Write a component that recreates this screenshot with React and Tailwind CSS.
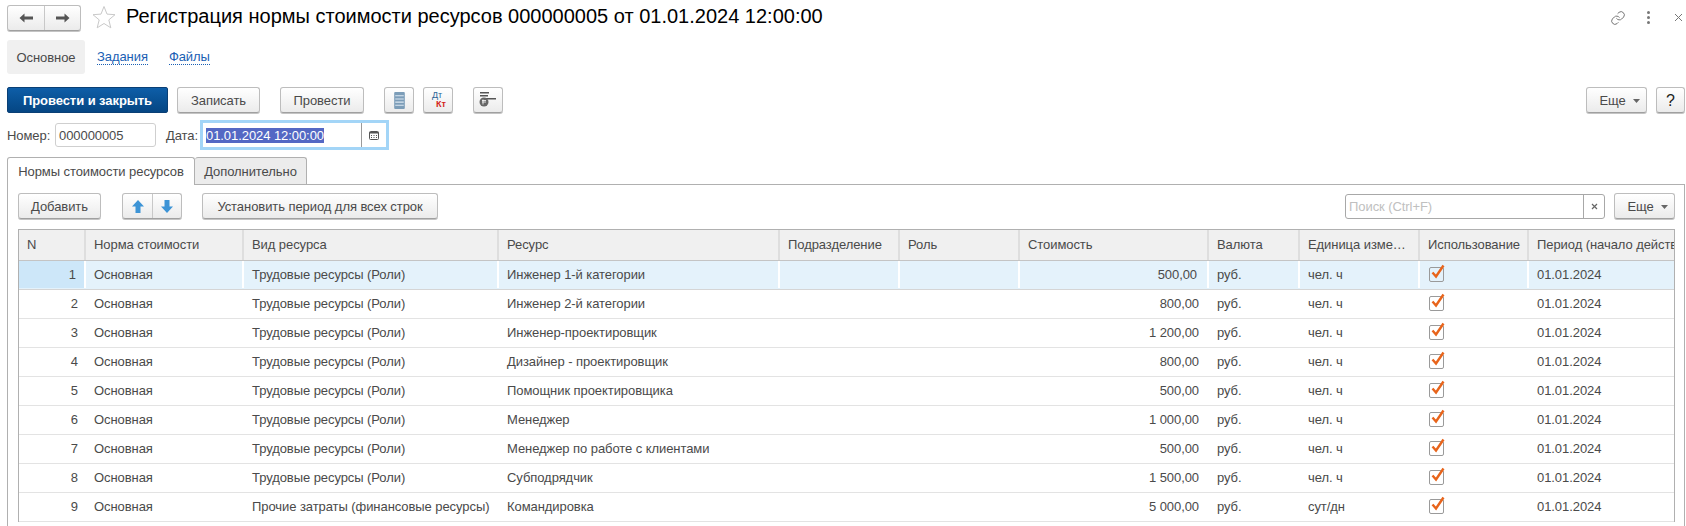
import React from "react";

const COLS = "grid grid-cols-[67px_158px_255px_281px_120px_120px_189px_91px_120px_109px_200px]";
const HEAD = ["N", "Норма стоимости", "Вид ресурса", "Ресурс", "Подразделение", "Роль", "Стоимость", "Валюта", "Единица измерения", "Использование", "Период (начало действия)"];
const T = "Трудовые ресурсы (Роли)";
const ROWS = [
  [1, T, "Инженер 1-й категории", "500,00", "чел. ч"],
  [2, T, "Инженер 2-й категории", "800,00", "чел. ч"],
  [3, T, "Инженер-проектировщик", "1 200,00", "чел. ч"],
  [4, T, "Дизайнер - проектировщик", "800,00", "чел. ч"],
  [5, T, "Помощник проектировщика", "500,00", "чел. ч"],
  [6, T, "Менеджер", "1 000,00", "чел. ч"],
  [7, T, "Менеджер по работе с клиентами", "500,00", "чел. ч"],
  [8, T, "Субподрядчик", "1 500,00", "чел. ч"],
  [9, "Прочие затраты (финансовые ресурсы)", "Командировка", "5 000,00", "сут/дн"],
];

const btn = "flex items-center justify-center h-[26px] rounded-[3px] border border-[#bdbdbd] border-b-[#a0a0a0] bg-gradient-to-b from-white to-[#ebebeb] shadow-[0_1px_0_#c4c4c4] text-[#4a4a4a]";

function Btn({ w, children }) {
  return <div className={`${btn} ${w}`}>{children}</div>;
}

function More({ w }) {
  return (
    <Btn w={w}>
      <span className="ml-[6px]">Еще</span>
      <svg width="7" height="4" viewBox="0 0 7 4" className="ml-[7px] mt-[2px]"><path d="M0 0h7L3.500 4z" fill="#666" /></svg>
    </Btn>
  );
}

function Check() {
  return (
    <svg width="18" height="20" viewBox="0 0 18 20" className="ml-[8px] -mt-[3px]">
      <rect x="1.500" y="4.500" width="14" height="14" rx="1.500" fill="none" stroke="#9a9a9a" />
      <path d="M4.500 9.500l3.500 4L15.500 2.500" fill="none" stroke="#e8641b" strokeWidth="2.400" />
    </svg>
  );
}

function Row({ r }) {
  const sel = r[0] === 1;
  const cell = `flex items-center px-2 whitespace-nowrap overflow-hidden ${sel ? "border-r-2 border-white" : ""}`;
  return (
    <div className={`${COLS} h-[29px] pb-px border-b border-[#e3e3e3] ${sel ? "bg-[#e4f2fb] border-b-[#d5d5d5]" : "bg-white"}`}>
      <div className={`${cell} justify-end ${sel ? "bg-[#cde7f9]" : ""}`}>{r[0]}</div>
      <div className={cell}>Основная</div>
      <div className={cell}>{r[1]}</div>
      <div className={cell}>{r[2]}</div>
      <div className={cell}></div>
      <div className={cell}></div>
      <div className={`${cell} justify-end pr-[10px]`}>{r[3]}</div>
      <div className={cell}>руб.</div>
      <div className={cell}>{r[4]}</div>
      <div className={`flex items-center ${sel ? "border-r-2 border-white" : ""}`}><Check /></div>
      <div className={cell}>01.01.2024</div>
    </div>
  );
}

export default function App() {
  return (
    <div className="w-[1686px] h-[526px] overflow-hidden bg-white text-[13px] leading-[15px] tracking-[-0.07px] text-[#4a4a4a] font-['Liberation_Sans',Arial,sans-serif]">
      {/* title */}
      <div className="flex items-center h-[35px] pl-[7px]">
        <div className={`${btn} w-[74px] h-[24px] !justify-start`}>
          <div className="w-[37px] h-full flex items-center justify-center border-r border-[#c8c8c8]">
            <svg width="15" height="10" viewBox="0 0 14 10"><path d="M0 5l5-4.500V3.500h8.500v3H5v3z" fill="#555" /></svg>
          </div>
          <div className="flex-1 flex items-center justify-center">
            <svg width="15" height="10" viewBox="0 0 14 10"><path d="M14 5L9 .5V3.500H.5v3H9v3z" fill="#555" /></svg>
          </div>
        </div>
        <svg width="24" height="24" viewBox="0 0 24 24" className="ml-[11px] mb-[2px]">
          <path d="M12 1.500l3 7.600 8 .6-6.200 5.200 2 7.900L12 18.500l-6.800 4.300 2-7.900L1 9.700l8-.6z" fill="none" stroke="#c9c9c9" />
        </svg>
        <div className="ml-[10px] mb-[3px] text-[20px] leading-[24px] tracking-normal text-black whitespace-nowrap">Регистрация нормы стоимости ресурсов 000000005 от 01.01.2024 12:00:00</div>
        <div className="ml-auto flex items-center pr-[3px]">
          <svg width="16" height="16" viewBox="0 0 24 24" fill="none" stroke="#777" strokeWidth="1.500" strokeLinecap="round">
            <path d="M10 13a5 5 0 0 0 7.500.5l3-3a5 5 0 0 0-7-7l-1.700 1.700" />
            <path d="M14 11a5 5 0 0 0-7.500-.5l-3 3a5 5 0 0 0 7 7l1.700-1.700" />
          </svg>
          <div className="ml-[21px] flex flex-col gap-[2px]">
            <div className="w-[3px] h-[3px] rounded-full bg-[#777]" />
            <div className="w-[3px] h-[3px] rounded-full bg-[#777]" />
            <div className="w-[3px] h-[3px] rounded-full bg-[#777]" />
          </div>
          <svg width="9" height="9" viewBox="0 0 9 9" className="ml-[24px]"><path d="M1 1l7 7M8 1L1 8" stroke="#777" /></svg>
        </div>
      </div>

      {/* page tabs */}
      <div className="flex items-center mt-[5px] ml-[7px] h-[34px]">
        <div className="w-[78px] h-full flex items-center justify-center bg-[#f0f0f0] rounded-[3px]">Основное</div>
        <span className="ml-[12px] text-[#1a5fb4] border-b border-dotted border-[#1a5fb4]">Задания</span>
        <span className="ml-[21px] text-[#1a5fb4] border-b border-dotted border-[#1a5fb4]">Файлы</span>
      </div>

      {/* command bar */}
      <div className="flex items-center mt-[13px] pr-px pl-[7px] h-[26px]">
        <div className="flex items-center justify-center w-[161px] h-[26px] rounded-[2px] border border-[#0a3f75] bg-gradient-to-b from-[#0e5ea8] to-[#054683] text-white font-bold">Провести и закрыть</div>
        <Btn w="w-[83px] ml-[9px]">Записать</Btn>
        <Btn w="w-[84px] ml-[20px]">Провести</Btn>
        <Btn w="w-[30px] ml-[20px]">
          <svg width="11" height="17" viewBox="0 0 10 16">
            <rect width="10" height="16" rx="1" fill="#7c9db8" />
            <path d="M1 3.500h8M1 6.500h8M1 9.500h8M1 12.500h8" stroke="#dce8f1" />
          </svg>
        </Btn>
        <Btn w="w-[30px] ml-[9px] relative">
          <span className="absolute left-[8px] top-[2px] text-[9px] leading-[10px] tracking-normal text-[#2a6496]">Дт</span>
          <span className="absolute left-[12px] top-[11px] text-[9px] leading-[10px] tracking-normal font-bold text-[#d3231a]">Кт</span>
        </Btn>
        <Btn w="w-[30px] ml-[20px]">
          <svg width="28" height="24" viewBox="0 0 28 24">
            <path d="M6 4h9v1.500H6zM6 7h8v1.500H6zM12 10h10v1.500H12z" fill="#555" />
            <circle cx="10" cy="14" r="4.500" fill="#666" />
            <path d="M8 14h4M8 12.500h4M9 11.500v5" stroke="#fff" strokeWidth=".8" fill="none" />
          </svg>
        </Btn>
        <More w="w-[61px] ml-auto" />
        <Btn w="w-[29px] ml-[9px] text-[16px] text-[#222]">?</Btn>
      </div>

      {/* header fields */}
      <div className="flex items-center mt-[7px] pl-[7px] h-[30px]">
        <span className="w-[48px]">Номер:</span>
        <div className="w-[101px] h-[24px] flex items-center px-[3px] rounded-[3px] border border-[#cfcfcf]">000000005</div>
        <span className="ml-[10px] w-[34px]">Дата:</span>
        <div className="w-[189px] h-[30px] flex items-center border-[3px] border-[#a3d5f7]">
          <div className="flex-1 pl-[3px]"><span className="bg-[#5468c4] text-white">01.01.2024 12:00:00</span></div>
          <div className="w-[25px] h-[24px] flex items-center justify-center border-l border-[#9a9a9a]">
            <svg width="10" height="10" viewBox="0 0 10 10">
              <rect x=".5" y="1.500" width="9" height="8" rx="1" fill="none" stroke="#555" />
              <path d="M.5 2h9v1.500h-9zM2 5h1v1H2zM4.500 5h1v1h-1zM7 5h1v1H7zM2 7h1v1H2zM4.500 7h1v1h-1zM7 7h1v1H7z" fill="#555" />
            </svg>
          </div>
        </div>
      </div>

      {/* tab strip */}
      <div className="flex items-end mt-[7px] pl-[7px] h-[27px] relative z-10">
        <div className="w-[188px] h-[28px] -mb-px flex items-center justify-center bg-white border border-b-0 border-[#b0b0b0] rounded-t-[3px]">Нормы стоимости ресурсов</div>
        <div className="w-[112px] h-[27px] flex items-center justify-center bg-[#ececec] border border-l-0 border-b-0 border-[#b0b0b0] rounded-t-[3px]">Дополнительно</div>
      </div>

      {/* tab panel */}
      <div className="ml-[7px] mr-px border border-[#b0b0b0] pl-[10px] pr-[9px] pt-[8px] h-[400px]">
        <div className="flex items-center h-[26px]">
          <Btn w="w-[83px]">Добавить</Btn>
          <div className={`${btn} w-[60px] ml-[21px]`}>
            <div className="w-[30px] h-full flex items-center justify-center border-r border-[#c8c8c8]">
              <svg width="12" height="13" viewBox="0 0 12 13"><path d="M6 0l6 6.500H8.500V13h-5V6.500H0z" fill="#3d94d6" /></svg>
            </div>
            <div className="flex-1 flex items-center justify-center">
              <svg width="12" height="13" viewBox="0 0 12 13"><path d="M6 13l6-6.500H8.500V0h-5v6.500H0z" fill="#3d94d6" /></svg>
            </div>
          </div>
          <Btn w="w-[236px] ml-[20px]">Установить период для всех строк</Btn>
          <div className="ml-auto w-[260px] h-[25px] flex items-center rounded-[3px] border border-[#a8a8a8]">
            <div className="flex-1 pl-[3px] text-[#c0c0c0]">Поиск (Ctrl+F)</div>
            <div className="w-[21px] h-full flex items-center justify-center border-l border-[#a8a8a8]">
              <svg width="7" height="7" viewBox="0 0 7 7"><path d="M1 1l5 5M6 1L1 6" stroke="#666" strokeWidth="1.200" /></svg>
            </div>
          </div>
          <More w="w-[61px] ml-[9px]" />
        </div>

        <div className="mt-[10px] border border-b-0 border-[#b0b0b0] overflow-hidden">
          <div className={`${COLS} h-[31px] bg-[#f0f0f0] border-b border-[#c4c4c4]`}>
            {HEAD.map((h) => (
              <div key={h} className="flex items-center pl-2 pr-2 min-w-0 whitespace-nowrap overflow-hidden border-r-2 border-[#dedede] pb-px last:border-r-0">
                <span className={h === "Единица измерения" ? "truncate" : ""}>{h}</span>
              </div>
            ))}
          </div>
          {ROWS.map((r) => <Row key={r[0]} r={r} />)}
        </div>
      </div>
    </div>
  );
}
